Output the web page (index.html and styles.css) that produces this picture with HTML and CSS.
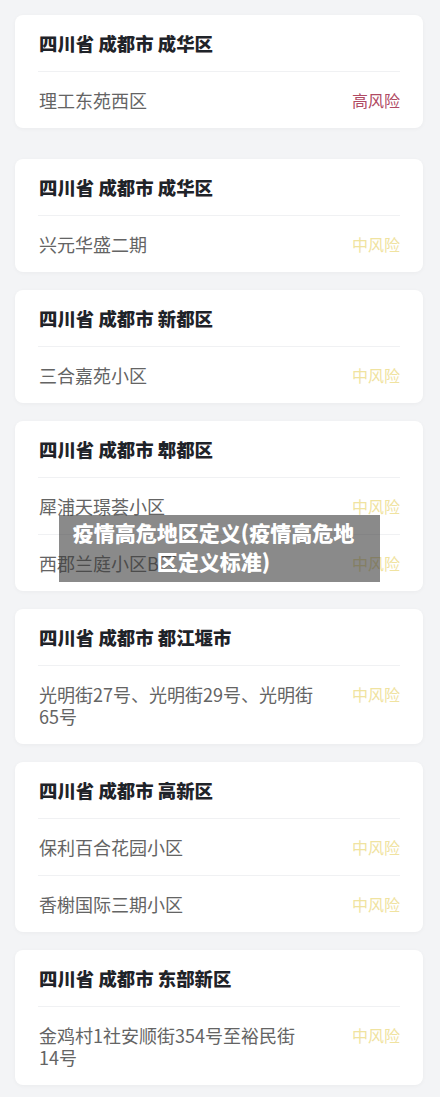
FILE: index.html
```html
<!DOCTYPE html>
<html lang="zh-CN">
<head>
    <meta charset="UTF-8">
    <meta name="viewport" content="width=device-width, initial-scale=1.0">
    <title>疫情高危地区定义</title>
    <link rel="stylesheet" href="styles.css">
</head>
<body>
    <div class="list">
        <div class="card first">
            <div class="card-title">四川省 成都市 成华区</div>
            <div class="row">
                <span class="place">理工东苑西区</span>
                <span class="risk high">高风险</span>
            </div>
        </div>

        <div class="card">
            <div class="card-title">四川省 成都市 成华区</div>
            <div class="row">
                <span class="place">兴元华盛二期</span>
                <span class="risk mid">中风险</span>
            </div>
        </div>

        <div class="card">
            <div class="card-title">四川省 成都市 新都区</div>
            <div class="row">
                <span class="place">三合嘉苑小区</span>
                <span class="risk mid">中风险</span>
            </div>
        </div>

        <div class="card">
            <div class="card-title">四川省 成都市 郫都区</div>
            <div class="row">
                <span class="place">犀浦天璟荟小区</span>
                <span class="risk mid">中风险</span>
            </div>
            <div class="row">
                <span class="place">西郡兰庭小区B区</span>
                <span class="risk mid">中风险</span>
            </div>
        </div>

        <div class="card">
            <div class="card-title">四川省 成都市 都江堰市</div>
            <div class="row">
                <span class="place">光明街27号、光明街29号、光明街65号</span>
                <span class="risk mid">中风险</span>
            </div>
        </div>

        <div class="card">
            <div class="card-title">四川省 成都市 高新区</div>
            <div class="row">
                <span class="place">保利百合花园小区</span>
                <span class="risk mid">中风险</span>
            </div>
            <div class="row">
                <span class="place">香榭国际三期小区</span>
                <span class="risk mid">中风险</span>
            </div>
        </div>

        <div class="card">
            <div class="card-title">四川省 成都市 东部新区</div>
            <div class="row">
                <span class="place">金鸡村1社安顺街354号至裕民街14号</span>
                <span class="risk mid">中风险</span>
            </div>
        </div>
    </div>

    <div class="caption">疫情高危地区定义(疫情高危地区定义标准)</div>
</body>
</html>
```

FILE: styles.css
```css
body {
    margin: 0;
    background: #f3f4f6;
    font-family: "Noto Sans CJK SC", "Noto Sans", sans-serif;
    color: #1f2329;
}
.list {
    display: flex;
    flex-direction: column;
    gap: 18px;
    padding: 15px 17px 14px 15px;
}
.card {
    background: #fff;
    border-radius: 8px;
    padding: 0 23px 0 23px;
    box-shadow: 0 1px 4px rgba(0, 0, 0, 0.04);
}
.card.first {
    margin-bottom: 13px;
}
.card-title {
    height: 56px;
    display: flex;
    align-items: center;
    padding-left: 1px;
    font-size: 18.4px;
    font-weight: 900;
    color: #1f2329;
}
.row {
    display: flex;
    justify-content: space-between;
    align-items: flex-start;
    border-top: 1px solid #f0f1f3;
    padding: 17px 0 17px 1px;
    font-size: 18px;
    line-height: 22px;
}
.place {
    color: #646464;
    max-width: 275px;
}
.risk {
    font-size: 16px;
    flex-shrink: 0;
}
.risk.high {
    color: #b04a63;
}
.risk.mid {
    color: #f0e3a0;
}
.caption {
    position: absolute;
    top: 515px;
    left: 59px;
    width: 321px;
    height: 67px;
    box-sizing: border-box;
    padding: 3px 20px 0 8px;
    background: rgba(60, 60, 60, 0.6);
    color: #fff;
    font-size: 21px;
    font-weight: 900;
    line-height: 29px;
    text-align: center;
}
```
